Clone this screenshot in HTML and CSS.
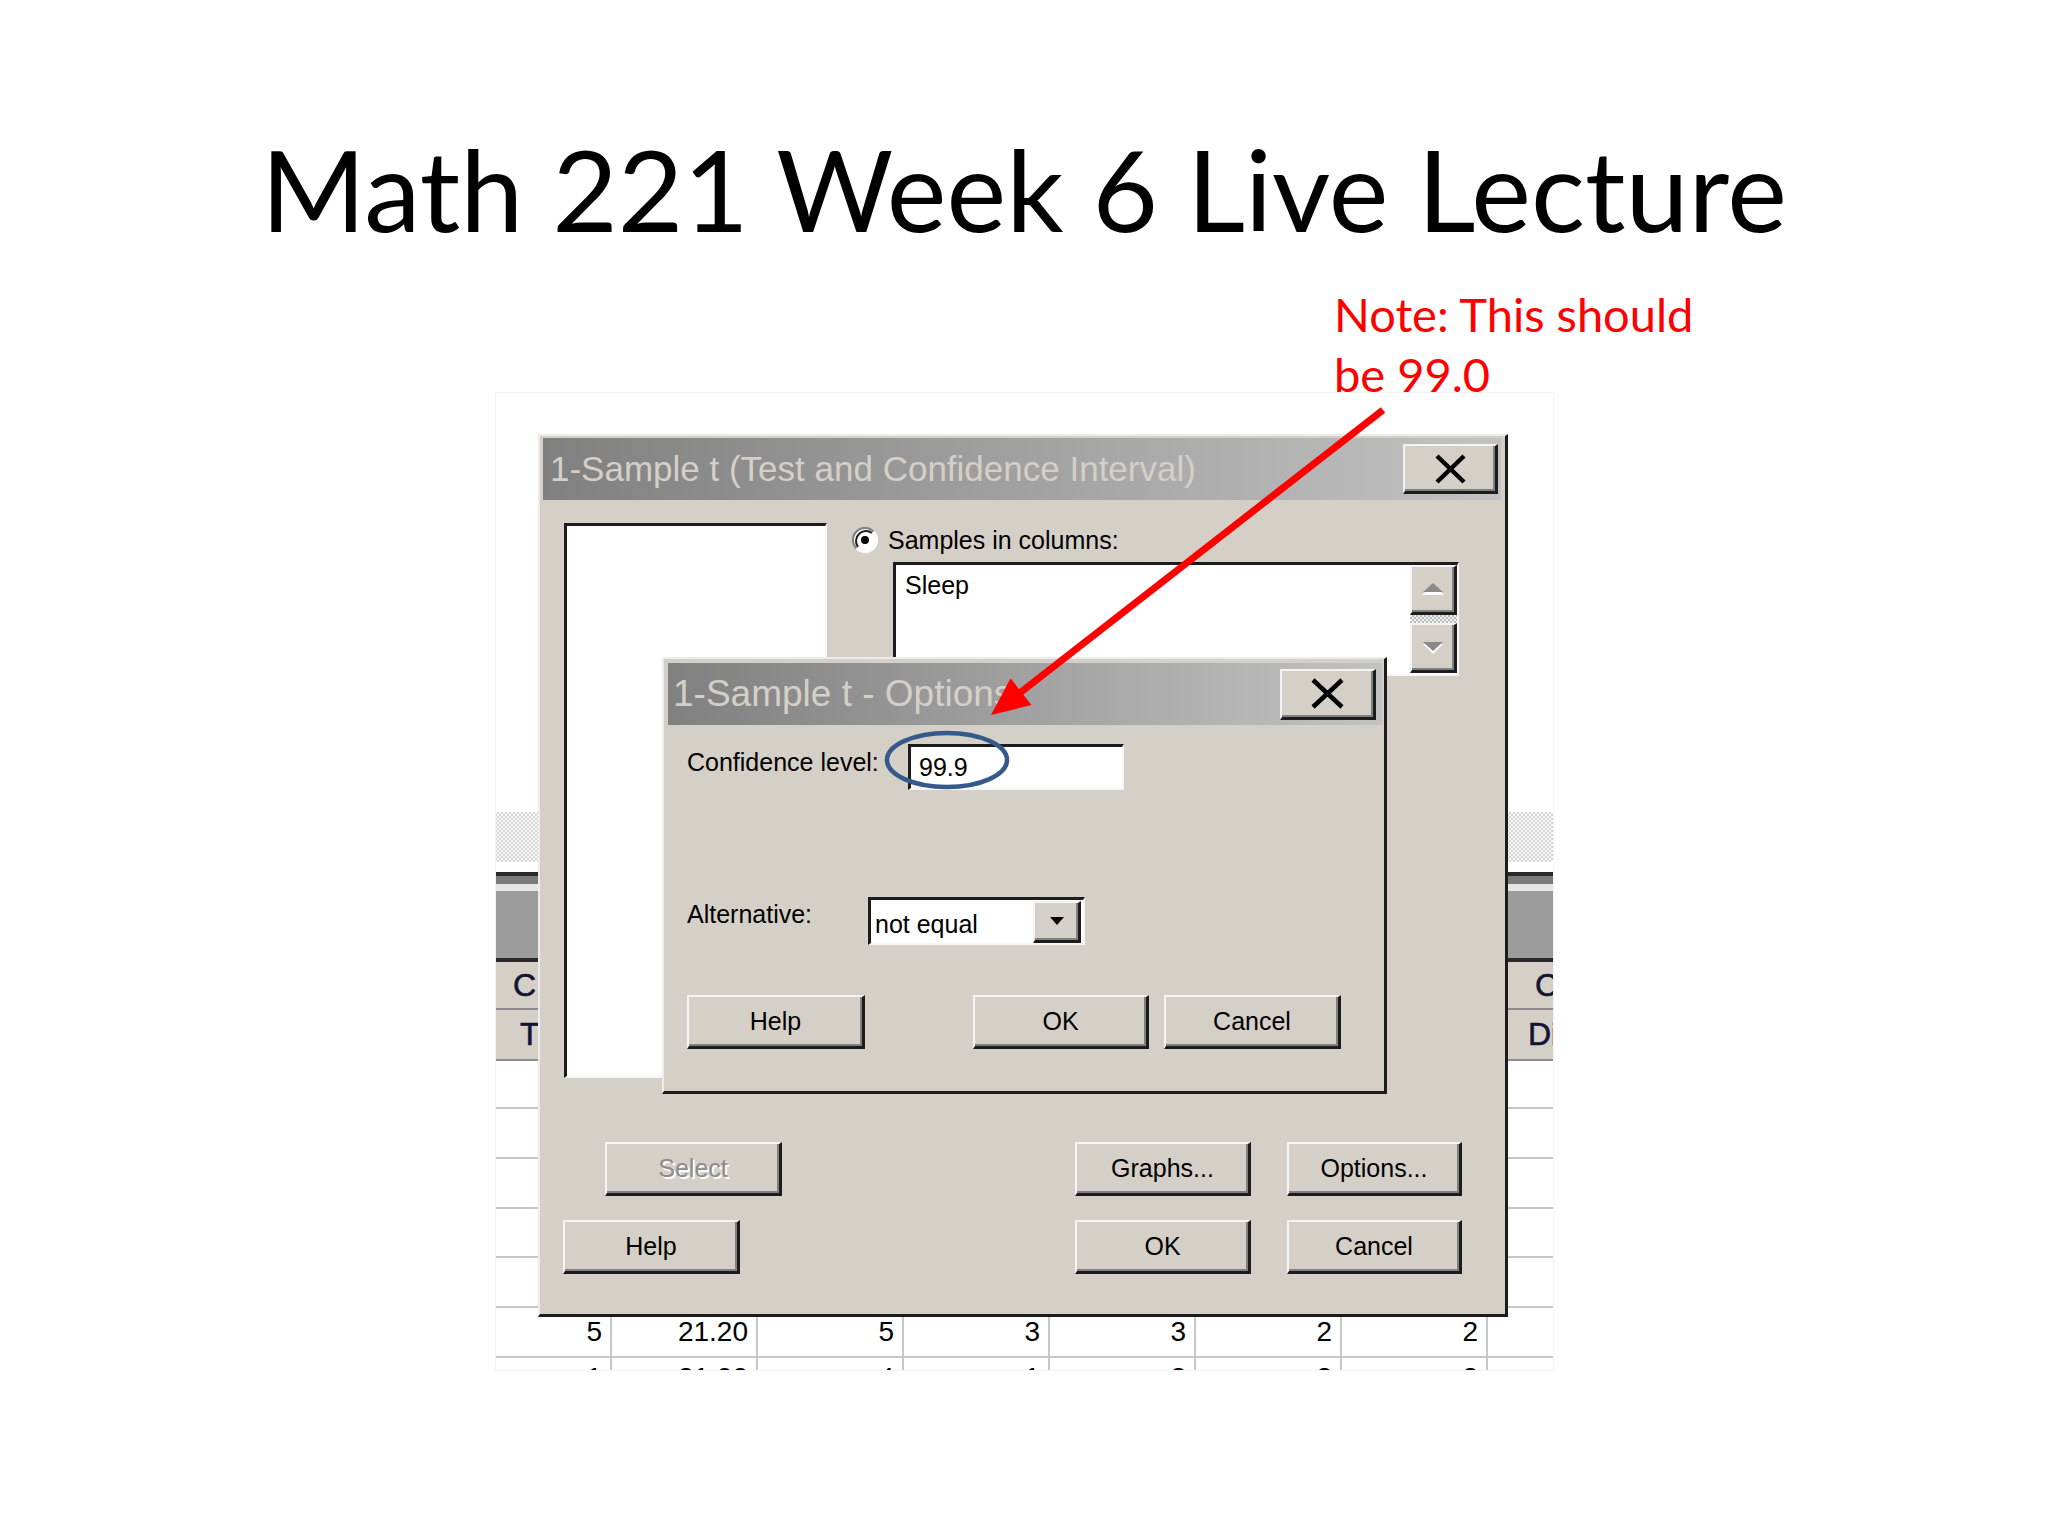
FILE: index.html
```html
<!DOCTYPE html>
<html>
<head>
<meta charset="utf-8">
<title>Math 221 Week 6 Live Lecture</title>
<link rel="stylesheet" href="styles.css">
</head>
<body>
<div class="slide">
  <h1 class="title">Math 221 Week 6 Live Lecture</h1>
  <p class="note">Note: This should<br>be 99.0</p>

  <div class="shot">
    <div class="sheet">
      <div class="sheet-top"></div>
      <div class="hatch"></div>
      <div class="gap"></div>
      <div class="band-dark"></div>
      <div class="band-mid"></div>
      <div class="band-light"></div>
      <div class="band-gray"></div>
      <div class="band-dark"></div>
      <div class="hdr hdr1"><span class="hl">C1</span><span class="hr">C8</span></div>
      <div class="hdr hdr2"><span class="hl hl2">Time</span><span class="hr hr2">Diff</span></div>
      <div class="row r48"><span></span><span></span><span></span><span></span><span></span><span></span><span></span><span></span></div>
      <div class="row"><span></span><span></span><span></span><span></span><span></span><span></span><span></span><span></span></div>
      <div class="row"><span></span><span></span><span></span><span></span><span></span><span></span><span></span><span></span></div>
      <div class="row r49"><span></span><span></span><span></span><span></span><span></span><span></span><span></span><span></span></div>
      <div class="row"><span></span><span></span><span></span><span></span><span></span><span></span><span></span><span></span></div>
      <div class="row nums"><span>5</span><span>21.20</span><span>5</span><span>3</span><span>3</span><span>2</span><span>2</span><span></span></div>
      <div class="row cut"><span>1</span><span>21.00</span><span>4</span><span>1</span><span>2</span><span>2</span><span>2</span><span></span></div>
    </div>

    <div class="dlg">
      <div class="tbar">
        <span class="ttext">1-Sample t (Test and Confidence Interval)</span>
        <span class="xbtn"><svg width="31" height="30" viewBox="0 0 31 30"><path d="M2 2 L29 28 M29 2 L2 28" stroke="#000" stroke-width="4.5" fill="none"/></svg></span>
      </div>
      <div class="dtop">
        <div class="list"></div>
        <div class="rcol">
          <div class="radio-row">
            <svg class="radio" width="26" height="26" viewBox="0 0 26 26">
              <circle cx="13" cy="13" r="11" fill="#fff"/>
              <path d="M4.5 21.5 A12 12 0 0 1 21.5 4.5" stroke="#808080" stroke-width="2" fill="none"/>
              <path d="M6 20 A10 10 0 0 1 20 6" stroke="#1c1c1c" stroke-width="2" fill="none"/>
              <path d="M21.5 4.5 A12 12 0 0 1 4.5 21.5" stroke="#fff" stroke-width="2" fill="none"/>
              <circle cx="13" cy="13" r="4" fill="#000"/>
            </svg>
            <span>Samples in columns:</span>
          </div>
          <div class="cols">
            <div class="cols-text">Sleep</div>
            <div class="sbar">
              <span class="sbtn"><svg width="26" height="16" viewBox="0 0 26 16"><polygon points="13,3 24,13 2,13" fill="#fff"/><polygon points="13,1 23,10 3,10" fill="#8a8a8a"/></svg></span>
              <span class="schk"></span>
              <span class="sbtn"><svg width="26" height="16" viewBox="0 0 26 16"><polygon points="3,4 23,4 13,14" fill="#fff"/><polygon points="3,2 23,2 13,11" fill="#8a8a8a"/></svg></span>
            </div>
          </div>
        </div>
      </div>
      <div class="brow brow1">
        <span class="btn disabled w177">Select</span>
        <span class="btn w176 mg1">Graphs...</span>
        <span class="btn w175 mg2">Options...</span>
      </div>
      <div class="brow brow2">
        <span class="btn w177">Help</span>
        <span class="btn w176 mg3">OK</span>
        <span class="btn w175 mg2">Cancel</span>
      </div>

      <div class="opt">
        <div class="tbar tbar-in">
          <span class="ttext ttext-in">1-Sample t - Options</span>
          <span class="xbtn xbtn-in"><svg width="33" height="31" viewBox="0 0 33 31"><path d="M2 2 L31 29 M31 2 L2 29" stroke="#000" stroke-width="4.5" fill="none"/></svg></span>
        </div>
        <div class="obody">
          <div class="orow">
            <span class="lbl lbl1">Confidence level:</span>
            <span class="inp">99.9</span>
          </div>
          <div class="orow orow2">
            <span class="lbl lbl2">Alternative:</span>
            <span class="combo"><span class="combo-text">not equal</span><span class="dd"><svg width="14" height="8" viewBox="0 0 14 8"><polygon points="0,0 14,0 7,8" fill="#000"/></svg></span></span>
          </div>
          <div class="orow orow3">
            <span class="btn w178">Help</span>
            <span class="btn w176 mg4">OK</span>
            <span class="btn w177 mg5">Cancel</span>
          </div>
        </div>
      </div>
    </div>
  </div>

  <svg class="overlay" width="2048" height="1536" viewBox="0 0 2048 1536">
    <ellipse cx="947" cy="760" rx="60" ry="27" fill="none" stroke="#35598a" stroke-width="4.5"/>
    <line x1="1383" y1="410" x2="1021" y2="692" stroke="#ff0000" stroke-width="7"/>
    <polygon points="991,715 1031.4,705.1 1010.6,678.3" fill="#ff0000"/>
  </svg>
</div>
</body>
</html>
```

FILE: styles.css
```css
html, body {
  margin: 0;
  padding: 0;
  background: #ffffff;
}

.slide {
  position: relative;
  width: 2048px;
  height: 1536px;
  overflow: hidden;
}

.title {
  margin: 0;
  padding-top: 120px;
  font-family: Lato, "Open Sans", sans-serif;
  font-weight: 400;
  font-size: 113px;
  line-height: 136px;
  text-align: center;
  color: #000;
  white-space: nowrap;
}

.note {
  position: absolute;
  left: 1334px;
  top: 284px;
  margin: 0;
  font-family: Lato, "Open Sans", sans-serif;
  font-size: 47px;
  line-height: 60px;
  color: #ff0000;
  z-index: 3;
}

.shot {
  position: relative;
  margin: 136px 0 0 495px;
  width: 1059px;
  height: 979px;
  outline: 1px solid #f3f3f3;
  outline-offset: -1px;
  overflow: hidden;
  font-family: "Liberation Sans", Arial, sans-serif;
}

/* spreadsheet behind */
.sheet {
  display: flex;
  flex-direction: column;
}
.sheet-top { height: 420px; }
.hatch {
  height: 50px;
  background-color: #fff;
  background-image: conic-gradient(#d4d4d4 25%, #fafafa 0 50%, #d4d4d4 0 75%, #fafafa 0);
  background-size: 4px 4px;
}
.gap { height: 10px; }
.band-dark { height: 4px; background: #2a2a2a; }
.band-mid { height: 8px; background: #7a7a7a; }
.band-light { height: 7px; background: #e6e6e6; }
.band-gray { height: 67px; background: #9c9c9c; }

.hdr {
  display: flex;
  justify-content: space-between;
  align-items: center;
  box-sizing: border-box;
  background: #d4d0c8;
  border-bottom: 2px solid #8c8c8c;
  font-size: 32px;
  color: #141432;
  white-space: nowrap;
  -webkit-text-stroke: 0.6px #141432;
}
.hdr1 { height: 48px; }
.hdr2 { height: 51px; }
.hl { padding-left: 18px; }
.hl2 { padding-left: 25px; }
.hr { width: 19px; overflow: visible; }
.hr2 { width: 26px; }

.row {
  display: grid;
  grid-template-columns: 117px repeat(6, 146px) 64px;
  height: 50px;
  box-sizing: border-box;
  border-bottom: 2px solid #c6c6c6;
  font-size: 28px;
  line-height: 48px;
  color: #000;
}
.row span {
  border-right: 2px solid #c6c6c6;
  text-align: right;
  padding-right: 8px;
}
.row span:last-child { border-right: none; }
.r48 { height: 48px; }
.r49 { height: 49px; }
.cut {
  height: 13px;
  border-bottom: none;
  overflow: hidden;
}
.cut span { margin-top: -4px; }

/* outer dialog */
.dlg {
  position: absolute;
  left: 43px;
  top: 42px;
  width: 970px;
  height: 883px;
  box-sizing: border-box;
  background: #d4d0c8;
  border-style: solid;
  border-width: 2px 3px 3px 2px;
  border-color: #ececec #1c1c1c #1c1c1c #ececec;
  padding: 2px 4px 4px 3px;
  font-size: 25px;
  color: #000;
}

.tbar {
  display: flex;
  align-items: center;
  justify-content: space-between;
  height: 62px;
  padding: 0 3px 0 7px;
  background: linear-gradient(to right, #808080, #c2c2c2);
}
.ttext {
  color: #d4d0c8;
  font-size: 35px;
  white-space: nowrap;
}
.xbtn {
  display: flex;
  align-items: center;
  justify-content: center;
  width: 95px;
  height: 50px;
  box-sizing: border-box;
  background: #d4d0c8;
  border-style: solid;
  border-width: 2px 3px 3px 2px;
  border-color: #f4f4f4 #1c1c1c #1c1c1c #f4f4f4;
  box-shadow: inset -2px -2px 0 #808080;
}

.dtop {
  display: flex;
  padding: 23px 0 0 21px;
}
.list {
  width: 263px;
  height: 555px;
  box-sizing: border-box;
  background: #fff;
  border-style: solid;
  border-width: 3px 2px 2px 3px;
  border-color: #1c1c1c #f6f6f6 #f6f6f6 #1c1c1c;
}
.rcol { margin-left: 25px; }
.radio-row {
  display: flex;
  align-items: center;
  gap: 10px;
  height: 26px;
  margin-top: 4px;
  white-space: nowrap;
}
.radio { display: block; }
.cols {
  display: flex;
  width: 566px;
  height: 114px;
  margin: 9px 0 0 41px;
  box-sizing: border-box;
  background: #fff;
  border-style: solid;
  border-width: 3px 2px 2px 3px;
  border-color: #1c1c1c #f6f6f6 #f6f6f6 #1c1c1c;
}
.cols-text {
  flex: 1;
  padding: 5px 9px;
  line-height: 30px;
}
.sbar {
  display: flex;
  flex-direction: column;
  width: 47px;
}
.sbtn {
  display: flex;
  align-items: center;
  justify-content: center;
  height: 50px;
  box-sizing: border-box;
  background: #d4d0c8;
  border-style: solid;
  border-width: 2px 3px 3px 2px;
  border-color: #f4f4f4 #1c1c1c #1c1c1c #f4f4f4;
  box-shadow: inset -2px -2px 0 #808080;
}
.schk {
  height: 8px;
  background-image: conic-gradient(#b8b8b8 25%, #f2f2f2 0 50%, #b8b8b8 0 75%, #f2f2f2 0);
  background-size: 4px 4px;
}

.brow { display: flex; }
.brow1 { margin-top: 64px; padding-left: 62px; }
.brow2 { margin-top: 24px; padding-left: 20px; }

.btn {
  display: flex;
  align-items: center;
  justify-content: center;
  height: 54px;
  box-sizing: border-box;
  background: #d4d0c8;
  border-style: solid;
  border-width: 2px 3px 3px 2px;
  border-color: #f4f4f4 #1c1c1c #1c1c1c #f4f4f4;
  box-shadow: inset -2px -2px 0 #808080;
  white-space: nowrap;
}
.btn.disabled {
  color: #8c8c8c;
  text-shadow: 2px 2px 0 #ffffff;
}
.w175 { width: 175px; }
.w176 { width: 176px; }
.w177 { width: 177px; }
.w178 { width: 178px; }
.mg1 { margin-left: 293px; }
.mg2 { margin-left: 36px; }
.mg3 { margin-left: 335px; }
.mg4 { margin-left: 108px; }
.mg5 { margin-left: 15px; }

/* options dialog on top */
.opt {
  position: absolute;
  left: 122px;
  top: 221px;
  width: 725px;
  height: 437px;
  box-sizing: border-box;
  background: #d4d0c8;
  border-style: solid;
  border-width: 2px 3px 3px 2px;
  border-color: #ececec #1c1c1c #1c1c1c #ececec;
  padding: 4px 2px 0 4px;
}
.tbar-in { padding: 0 6px 0 5px; }
.ttext-in { font-size: 37px; }
.xbtn-in { width: 96px; height: 51px; }

.obody { padding: 19px 0 0 19px; }
.orow {
  display: flex;
  align-items: flex-start;
}
.lbl {
  line-height: 30px;
  white-space: nowrap;
}
.lbl1 { width: 221px; margin-top: 3px; }
.lbl2 { width: 181px; margin-top: 2px; }
.orow2 { margin-top: 107px; }
.orow3 { margin-top: 50px; }

.inp {
  display: block;
  width: 216px;
  height: 46px;
  box-sizing: border-box;
  background: #fff;
  border-style: solid;
  border-width: 3px 2px 2px 3px;
  border-color: #1c1c1c #f6f6f6 #f6f6f6 #1c1c1c;
  padding-left: 8px;
  line-height: 40px;
}
.combo {
  display: flex;
  align-items: center;
  justify-content: space-between;
  width: 217px;
  height: 48px;
  box-sizing: border-box;
  background: #fff;
  border-style: solid;
  border-width: 3px 2px 2px 3px;
  border-color: #1c1c1c #f6f6f6 #f6f6f6 #1c1c1c;
  padding: 0 2px 0 4px;
}
.combo-text { padding-top: 6px; }
.dd {
  display: flex;
  align-items: center;
  justify-content: center;
  width: 48px;
  height: 42px;
  box-sizing: border-box;
  background: #d4d0c8;
  border-style: solid;
  border-width: 2px 3px 3px 2px;
  border-color: #f4f4f4 #1c1c1c #1c1c1c #f4f4f4;
  box-shadow: inset -2px -2px 0 #808080;
}

.overlay {
  position: absolute;
  left: 0;
  top: 0;
  pointer-events: none;
  z-index: 4;
}
```
